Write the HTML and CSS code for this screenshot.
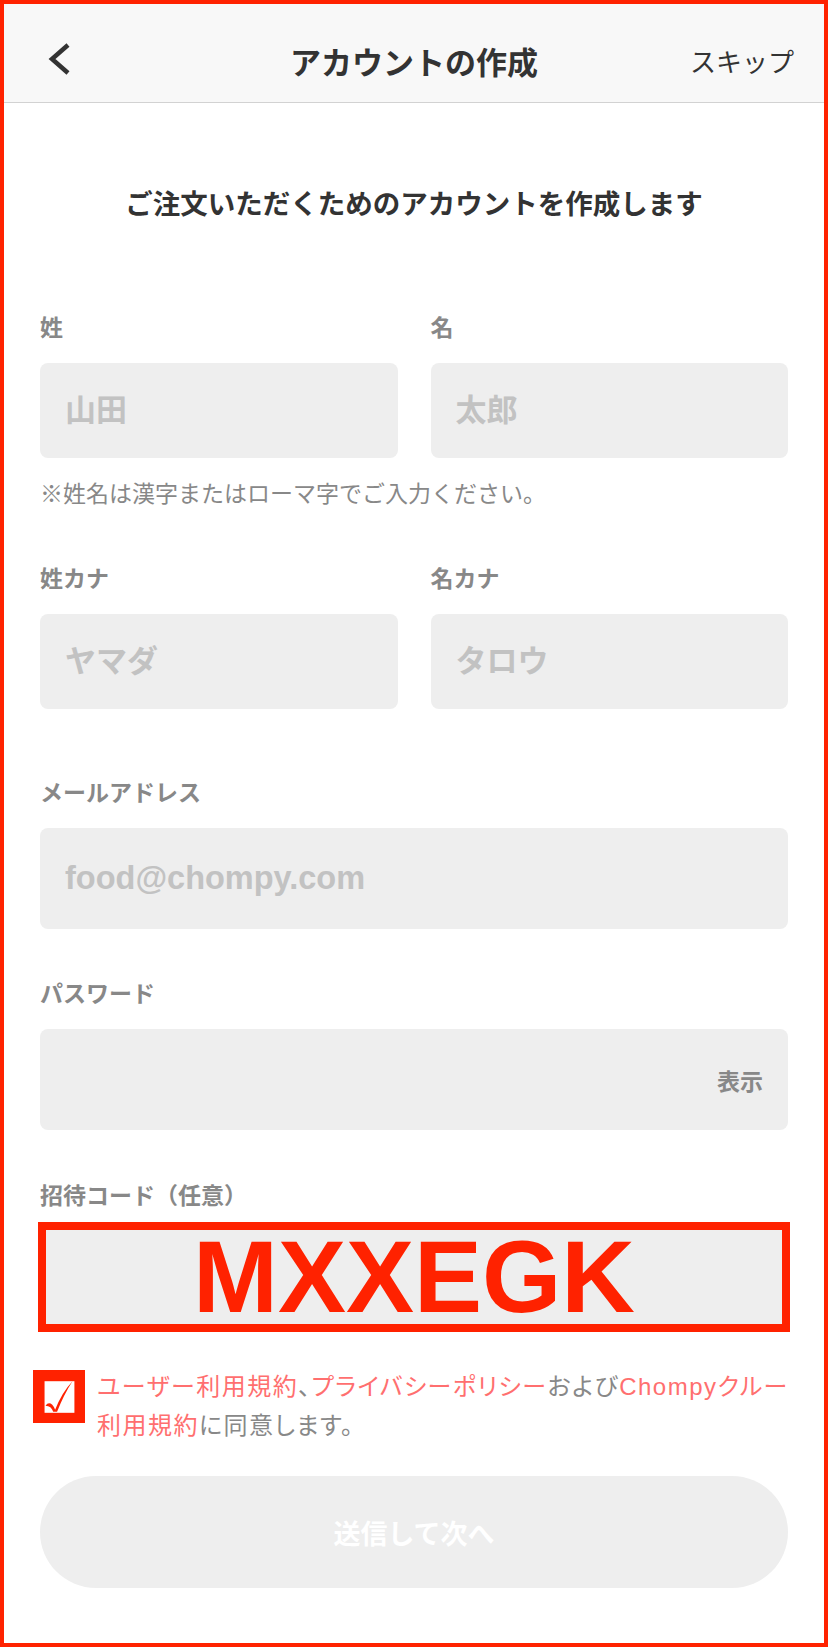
FILE: index.html
```html
<!DOCTYPE html>
<html lang="ja">
<head>
    <meta charset="utf-8">
    <title>アカウントの作成</title>
    <link rel="stylesheet" href="styles.css">
</head>
<body>
<div class="page">

    <div class="header">
        <div class="header_left">
            <svg class="back_icon" width="24" height="36" viewBox="0 0 24 36">
                <polyline points="20,3 4,17 20,31" fill="none" stroke="#333333" stroke-width="4.5" stroke-linejoin="miter"/>
            </svg>
        </div>
        <div class="header_title">アカウントの作成</div>
        <div class="header_right">スキップ</div>
    </div>

    <div class="content">
        <div class="lead">ご注文いただくためのアカウントを作成します</div>

        <div class="row first_row">
            <div class="field">
                <div class="label">姓</div>
                <input class="input input_name" type="text" placeholder="山田">
            </div>
            <div class="field">
                <div class="label">名</div>
                <input class="input input_name" type="text" placeholder="太郎">
            </div>
        </div>
        <div class="note">※姓名は漢字またはローマ字でご入力ください。</div>

        <div class="row kana_row">
            <div class="field">
                <div class="label">姓カナ</div>
                <input class="input input_name" type="text" placeholder="ヤマダ">
            </div>
            <div class="field">
                <div class="label">名カナ</div>
                <input class="input input_name" type="text" placeholder="タロウ">
            </div>
        </div>

        <div class="field mail_field">
            <div class="label">メールアドレス</div>
            <input class="input input_wide input_mail" type="email" placeholder="food@chompy.com">
        </div>

        <div class="field pass_field">
            <div class="label">パスワード</div>
            <div class="pass_box">
                <span class="show_btn">表示</span>
            </div>
        </div>

        <div class="field invite_field">
            <div class="label">招待コード（任意）</div>
            <div class="invite_box">MXXEGK</div>
        </div>

        <div class="terms">
            <svg class="check" width="52" height="53" viewBox="0 0 54 52" preserveAspectRatio="none">
                <rect x="0" y="0" width="54" height="52" fill="#ff2200"/>
                <rect x="12" y="11" width="31" height="31" fill="#ffffff"/>
                <path d="M13 35 Q16 31 20 34 Q22 36 23 39 Q30 22 41 11 Q32 24 25 41 L21 41 Q19 35 13 35 Z" fill="#ff2200"/>
            </svg>
            <p class="terms_text"><span class="link">ユーザー利用規約</span>、<span class="link">プライバシーポリシー</span>および<span class="link">Chompyクルー</span><br><span class="link">利用規約</span>に同意します。</p>
        </div>

        <button class="submit_btn">送信して次へ</button>
    </div>

</div>
</body>
</html>
```

FILE: styles.css
```css
* {
  box-sizing: border-box;
}

body {
  margin: 0;
  background-color: #ffffff;
  color: #333333;
  font-family: "Liberation Sans", "Noto Sans CJK JP", sans-serif;
}

.page {
  min-height: 1647px;
  border: 4px solid #ff2200;
  background-color: #ffffff;
}

.header {
  display: grid;
  grid-template-columns: 1fr auto 1fr;
  align-items: center;
  height: 99px;
  padding: 14px 30px 0 30px;
  background-color: #f8f8f8;
  border-bottom: 1px solid #d2d2d2;
}

.header_left {
  display: flex;
  align-items: center;
}

.back_icon {
  display: block;
  margin-left: 14px;
}

.header_title {
  font-size: 31px;
  font-weight: 700;
  color: #333333;
}

.header_right {
  text-align: right;
  font-size: 26px;
  color: #333333;
}

.content {
  padding: 0 36px;
}

.lead {
  margin-top: 82px;
  text-align: center;
  font-size: 27.5px;
  font-weight: 700;
  line-height: 40px;
  color: #333333;
}

.row {
  display: grid;
  grid-template-columns: 1fr 1fr;
  column-gap: 33px;
}

.first_row {
  margin-top: 88px;
}

.kana_row {
  margin-top: 55px;
}

.label {
  font-size: 23px;
  font-weight: 700;
  line-height: 30px;
  color: #888888;
  margin-bottom: 20px;
}

.input {
  display: block;
  width: 100%;
  border: 0;
  border-radius: 8px;
  background-color: #eeeeee;
  padding: 0 25px;
  font-family: "Liberation Sans", "Noto Sans CJK JP", sans-serif;
  font-size: 31px;
  font-weight: 700;
  color: #333333;
  outline: none;
}

.input::placeholder {
  color: #c2c2c2;
}

.input_name {
  height: 95px;
}

.input_wide {
  height: 101px;
}

.input_mail {
  font-size: 32.5px;
}

.note {
  margin-top: 21px;
  font-size: 23px;
  line-height: 30px;
  color: #888888;
}

.mail_field {
  margin-top: 69px;
}

.pass_field {
  margin-top: 50px;
}

.pass_box {
  display: flex;
  align-items: center;
  justify-content: flex-end;
  height: 101px;
  padding: 0 25px;
  border-radius: 8px;
  background-color: #eeeeee;
}

.show_btn {
  font-size: 23px;
  font-weight: 700;
  color: #888888;
}

.invite_field {
  margin-top: 51px;
}

.invite_field .label {
  margin-bottom: 11px;
}

.invite_box {
  height: 110px;
  margin: 0 -2px;
  border: 8px solid #ff2200;
  background-color: #eeeeee;
  text-align: center;
  font-family: "Liberation Sans", sans-serif;
  font-size: 102px;
  font-weight: 700;
  line-height: 94px;
  color: #ff2200;
}

.terms {
  display: flex;
  align-items: flex-start;
  margin-top: 38px;
  margin-left: -7px;
  margin-right: -30px;
}

.check {
  flex-shrink: 0;
  display: block;
}

.terms_text {
  margin: -3px 0 0 12px;
  font-size: 24px;
  line-height: 39px;
  letter-spacing: 1.5px;
  color: #888888;
  white-space: nowrap;
  font-feature-settings: "palt";
}

.link {
  color: #ff6f6f;
}

.submit_btn {
  display: block;
  width: 100%;
  height: 112px;
  margin-top: 31px;
  border: 0;
  border-radius: 56px;
  background-color: #eeeeee;
  color: #ffffff;
  font-family: "Liberation Sans", "Noto Sans CJK JP", sans-serif;
  font-size: 27px;
  font-weight: 700;
}
```
